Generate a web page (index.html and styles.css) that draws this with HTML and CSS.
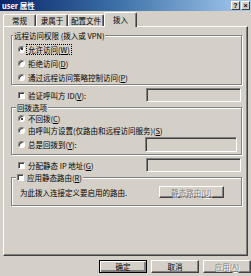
FILE: index.html
```html
<!DOCTYPE html>
<html>
<head>
<meta charset="utf-8">
<link rel="stylesheet" href="styles.css">
</head>
<body>
<div class="titlebar">
  <span class="title">user 属性</span>
  <div class="tbtns"><span class="tbtn">?</span><span class="tbtn">×</span></div>
</div>
<div class="tabs">
  <div class="tab t1">常规</div>
  <div class="tab t2">隶属于</div>
  <div class="tab t3">配置文件</div>
  <div class="tab sel">拨入</div>
</div>
<div class="panel">
  <div class="group g1">
    <div class="legend">远程访问权限 (拨入或 VPN)</div>
    <div class="row"><span class="radio on"></span><span class="focus">允许访问(<u>W</u>)</span></div>
    <div class="row"><span class="radio"></span><span class="lbl">拒绝访问(<u>D</u>)</span></div>
    <div class="row"><span class="radio"></span><span class="lbl">通过远程访问策略控制访问(<u>P</u>)</span></div>
  </div>
  <div class="line l-verify"><span class="check"></span><span class="lbl">验证呼叫方 ID(<u>V</u>):</span><span class="input"></span></div>
  <div class="group g2">
    <div class="legend">回拨选项</div>
    <div class="row r1"><span class="radio on"></span><span class="lbl">不回拨(<u>C</u>)</span></div>
    <div class="row r2"><span class="radio"></span><span class="lbl">由呼叫方设置(仅路由和远程访问服务)(<u>S</u>)</span></div>
    <div class="row r3"><span class="radio"></span><span class="lbl">总是回拨到(<u>Y</u>):</span><span class="input in-group"></span></div>
  </div>
  <div class="line l-ip"><span class="check"></span><span class="lbl">分配静态 IP 地址(<u>G</u>)</span><span class="input"></span></div>
  <div class="group g3">
    <div class="legend legend-check"><span class="check"></span><span class="lbl">应用静态路由(<u>R</u>)</span></div>
    <div class="row r-route"><span class="txt">为此拨入连接定义要启用的路由.</span><span class="btn disabled route-btn">静态路由(<u>U</u>)</span></div>
  </div>
</div>
<div class="buttons">
  <span class="btn default">确定</span>
  <span class="btn">取消</span>
  <span class="btn disabled">应用(<u>A</u>)</span>
</div>
</body>
</html>
```
FILE: styles.css
```css
html, body {
  margin: 0;
  padding: 0;
}
body {
  width: 251px;
  height: 276px;
  overflow: hidden;
  background: #d4d0c8;
  font-family: "Noto Sans CJK SC", "Noto Sans", sans-serif;
  font-size: 7.5px;
  color: #000;
}
.titlebar {
  height: 11px;
  display: flex;
  align-items: center;
  justify-content: space-between;
  background: linear-gradient(to right, #0a246a, #3a6ea5 45%, #a6caf0);
  padding: 0 1px 0 2px;
}
.title {
  color: #fff;
  font-weight: bold;
  line-height: 11px;
}
.tbtns {
  display: flex;
  gap: 1px;
}
.tbtn {
  width: 7px;
  height: 7px;
  background: #d4d0c8;
  border: 1px solid;
  border-color: #fff #404040 #404040 #fff;
  font-size: 7px;
  line-height: 7px;
  font-weight: bold;
  text-align: center;
  font-family: "Liberation Sans", sans-serif;
}
.tabs {
  height: 15px;
  display: flex;
  align-items: flex-end;
  padding-left: 3px;
}
.tab {
  box-sizing: border-box;
  height: 12px;
  line-height: 11px;
  text-align: center;
  border-top: 1px solid #fff;
  border-left: 1px solid #fff;
  border-right: 1px solid #404040;
  border-radius: 2px 2px 0 0;
  box-shadow: inset -1px 0 #808080;
}
.t1 { width: 33px; }
.t2 { width: 32px; }
.t3 { width: 36px; }
.tab.sel {
  width: 33px;
  height: 15px;
  line-height: 13px;
  margin-bottom: -1px;
  background: #d4d0c8;
  position: relative;
  z-index: 1;
}
.panel {
  box-sizing: border-box;
  margin: 0 3px;
  height: 230px;
  border: 1px solid;
  border-color: #fff #404040 #404040 #fff;
  box-shadow: inset -1px -1px #808080;
  display: flex;
  flex-direction: column;
}
.group {
  margin: 0 5px 0 7px;
  border: 1px solid #808080;
  box-shadow: inset 1px 1px #fff, 1px 1px #fff;
}
.g1 { margin-top: 8px; }
.g2 { margin-top: 5px; padding-bottom: 2px; }
.g3 { margin-top: 5px; padding-bottom: 7px; }
.legend {
  width: fit-content;
  height: 9px;
  line-height: 9px;
  margin-top: -5px;
  padding: 0 1px;
  background: #d4d0c8;
  display: flex;
  align-items: center;
}
.g1 .legend { margin-left: 1px; margin-bottom: 2px; }
.g2 .legend { margin-left: 4px; margin-bottom: 1px; }
.g3 .legend { margin-left: 4px; margin-bottom: 4px; }
.row {
  display: flex;
  align-items: center;
  height: 14px;
  padding-left: 6px;
}
.g2 .r1 { height: 11px; }
.g2 .r2 { height: 12px; }
.g2 .r3 { height: 16px; }
.r-route { height: 12px; padding-left: 8px; }
.line {
  display: flex;
  align-items: center;
  height: 14px;
  margin-top: 3px;
  padding-left: 14px;
}
.radio {
  box-sizing: border-box;
  width: 7px;
  height: 7px;
  flex: none;
  border-radius: 50%;
  background: #fff;
  border: 1px solid;
  border-color: #808080 #fff #fff #808080;
  box-shadow: inset 1px 1px #404040;
  display: flex;
  align-items: center;
  justify-content: center;
  margin-right: 3px;
}
.radio.on::after {
  content: "";
  width: 2px;
  height: 2px;
  border-radius: 50%;
  background: #000;
}
.check {
  box-sizing: border-box;
  width: 7px;
  height: 7px;
  flex: none;
  background: #fff;
  border: 1px solid;
  border-color: #808080 #fff #fff #808080;
  box-shadow: inset 1px 1px #404040;
  margin-right: 3px;
}
.focus {
  outline: 1px dotted #000;
  outline-offset: 0;
  padding: 0 1px;
  margin-left: -1px;
  line-height: 9px;
}
.lbl, .txt {
  white-space: nowrap;
  line-height: 9px;
}
.input {
  box-sizing: border-box;
  width: 95px;
  height: 14px;
  margin-left: auto;
  margin-right: 6px;
  background: #d4d0c8;
  border: 1px solid;
  border-color: #808080 #fff #fff #808080;
  box-shadow: inset 1px 1px #404040, inset -1px -1px #d4d0c8;
}
.input.in-group {
  width: 92px;
  height: 15px;
  margin-right: 4px;
}
.btn {
  box-sizing: border-box;
  height: 13px;
  width: 48px;
  display: flex;
  align-items: center;
  justify-content: center;
  background: #d4d0c8;
  border: 1px solid;
  border-color: #fff #404040 #404040 #fff;
  box-shadow: inset -1px -1px #808080;
  white-space: nowrap;
}
.btn.disabled {
  color: #808080;
  text-shadow: 1px 1px #fff;
}
.btn.default {
  border-color: #000;
  box-shadow: inset 1px 1px #fff, inset -2px -2px #808080;
}
.route-btn {
  width: 65px;
  height: 12px;
  margin-left: auto;
  margin-right: 17px;
}
.buttons {
  display: flex;
  gap: 4px;
  margin-top: 4px;
  padding-left: 99px;
}
.buttons .btn:last-child { width: 48px; }
```
